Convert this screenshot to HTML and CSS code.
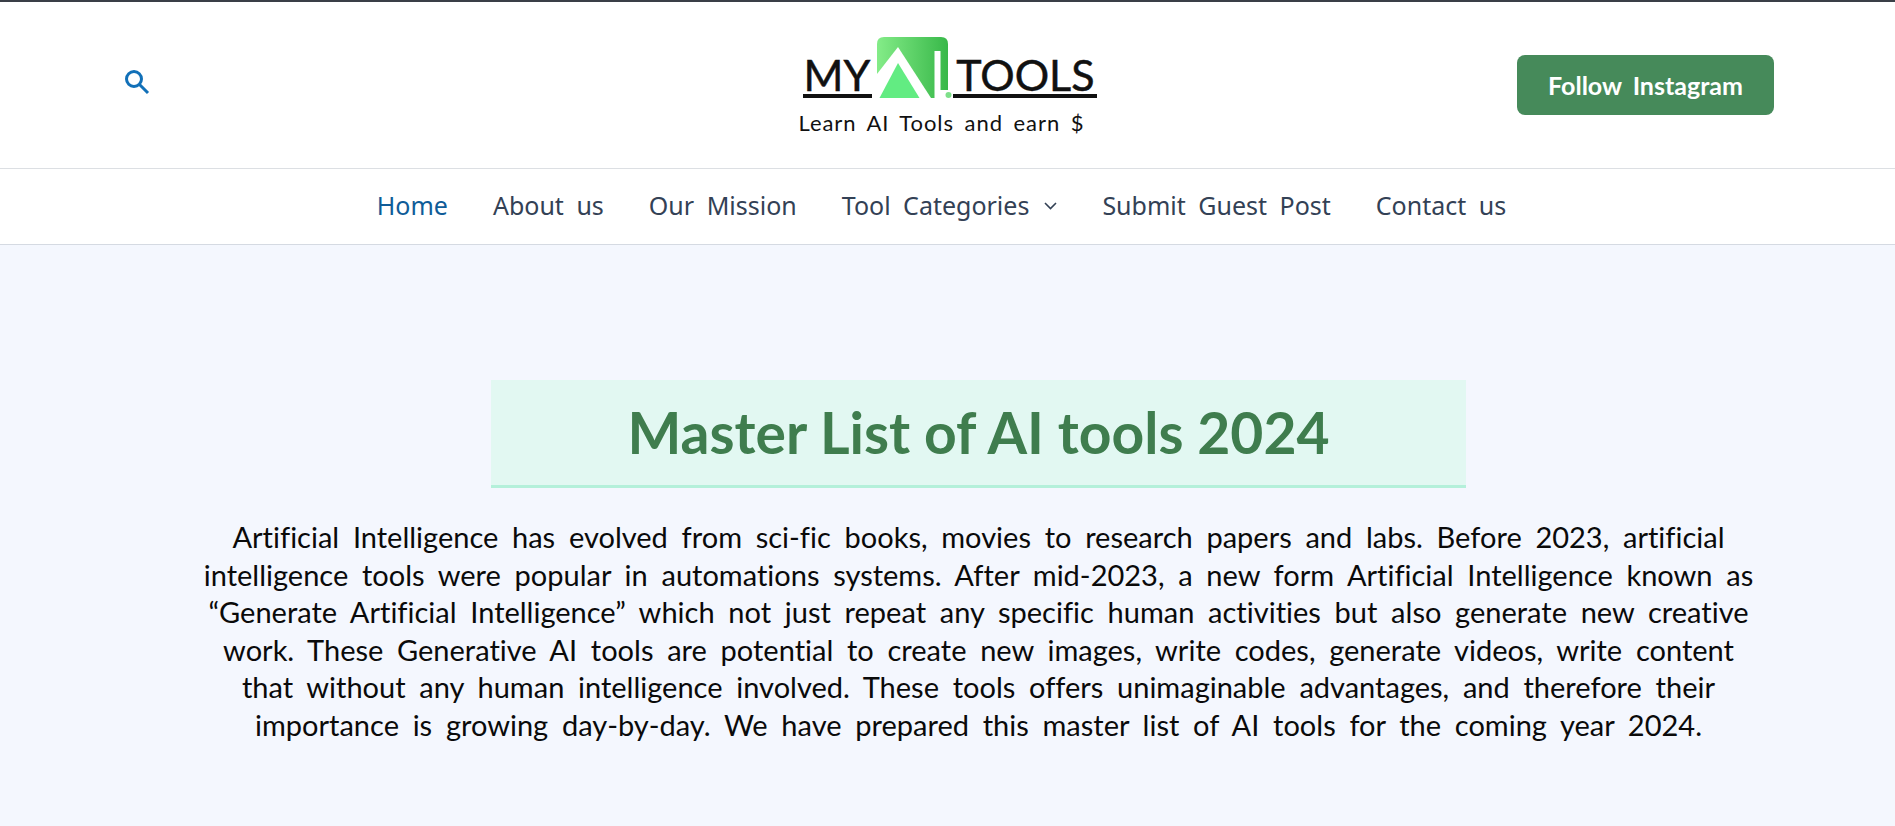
FILE: index.html
```html
<!DOCTYPE html>
<html lang="en">
<head>
  <meta charset="UTF-8">
  <meta name="viewport" content="width=device-width, initial-scale=1.0">
  <title>My AI Tools</title>
  <link rel="stylesheet" href="styles.css">
</head>
<body>
  <header class="top">
    <a class="search-link" href="#" aria-label="Search">
      <svg width="26" height="26" viewBox="0 0 26 26" fill="none" stroke="#1170b8" stroke-width="3">
        <circle cx="10" cy="10" r="7.5"/>
        <path d="M15.5 15.5 L24 24"/>
      </svg>
    </a>
    <a class="logo" href="#">
      <span class="logo-mark">
        <span class="logo-word logo-my">MY</span>
        <svg class="logo-ai" width="75" height="61" viewBox="0 0 75 61">
          <defs>
            <linearGradient id="logo-grad" x1="0" y1="0" x2="1" y2="0">
              <stop offset="0" stop-color="#84ec88"/>
              <stop offset="1" stop-color="#38b849"/>
            </linearGradient>
          </defs>
          <path d="M7 0 H64 Q71 0 71 7 V53 H63 V61 H0 V7 Q0 0 7 0 Z" fill="url(#logo-grad)"/>
          <path d="M21 10 L54 61 H0 V37 Z" fill="#fff"/>
          <path d="M21 26 L42.5 61 H2.5 Z" fill="#62ec82"/>
          <rect x="57.5" y="14" width="6" height="47" fill="#fff"/>
          <circle cx="71.5" cy="58" r="3" fill="#7fe08a"/>
        </svg>
        <span class="logo-word logo-tools">TOOLS</span>
      </span>
      <span class="logo-tag">Learn AI Tools and earn $</span>
    </a>
    <div class="top-right">
      <a class="follow-btn" href="#">Follow Instagram</a>
    </div>
  </header>

  <nav class="menu">
    <a class="menu-item active" href="#">Home</a>
    <a class="menu-item" href="#">About us</a>
    <a class="menu-item" href="#">Our Mission</a>
    <a class="menu-item" href="#">Tool Categories
      <svg class="caret" width="13" height="8" viewBox="0 0 13 8" fill="none" stroke="#334155" stroke-width="1.6">
        <path d="M1 1 L6.5 6.5 L12 1"/>
      </svg>
    </a>
    <a class="menu-item" href="#">Submit Guest Post</a>
    <a class="menu-item" href="#">Contact us</a>
  </nav>

  <main class="content">
    <h1 class="title">Master List of AI tools 2024</h1>
    <p class="intro">Artificial Intelligence has evolved from sci-fic books, movies to research papers and labs. Before 2023, artificial intelligence tools were popular in automations systems. After mid-2023, a new form Artificial Intelligence known as “Generate Artificial Intelligence” which not just repeat any specific human activities but also generate new creative work. These Generative AI tools are potential to create new images, write codes, generate videos, write content that without any human intelligence involved. These tools offers unimaginable advantages, and therefore their importance is growing day-by-day. We have prepared this master list of AI tools for the coming year 2024.</p>
  </main>
</body>
</html>
```

FILE: styles.css
```css
html, body {
  height: 100%;
}
body {
  margin: 0;
  overflow: hidden;
  font-family: "Lato", sans-serif;
  font-variant-ligatures: none;
  background: #f4f7fe;
  border-top: 2px solid #3a3f47;
  color: #000;
}
a {
  text-decoration: none;
  color: inherit;
}
.top {
  display: grid;
  grid-template-columns: 1fr auto 1fr;
  align-items: center;
  height: 166px;
  padding: 0 121px 0 124px;
  background: #fff;
  border-bottom: 1px solid #dcdfe3;
}
.search-link {
  display: flex;
  margin-top: -6px;
}
.logo {
  display: flex;
  flex-direction: column;
  margin-top: -1px;
  margin-left: -3px;
}
.logo-mark {
  display: flex;
  align-items: flex-end;
  height: 62px;
  margin: 2px 0 0 5px;
}
.logo-word {
  font-size: 43px;
  line-height: 38px;
  height: 38px;
  color: #111;
  -webkit-text-stroke: 0.5px #111;
  border-bottom: 4px solid #111;
}
.logo-my {
  padding-right: 2px;
  margin-right: 5px;
}
.logo-ai {
  flex: none;
  margin-right: 1px;
}
.logo-tools {
  padding: 0 2px 0 3px;
}
.logo-tag {
  margin-top: 12px;
  font-size: 22px;
  line-height: 26px;
  letter-spacing: 0.95px;
  word-spacing: 4px;
  white-space: nowrap;
  color: #111;
}
.top-right {
  display: flex;
  justify-content: flex-end;
}
.follow-btn {
  display: flex;
  align-items: center;
  justify-content: center;
  width: 257px;
  height: 60px;
  border-radius: 8px;
  background: #468a5a;
  color: #fff;
  font-size: 25px;
  font-weight: 700;
  word-spacing: 5px;
}
.menu {
  display: flex;
  justify-content: center;
  align-items: center;
  gap: 45px;
  height: 75px;
  padding-right: 12px;
  background: #fff;
  border-bottom: 1px solid #d5dae2;
  font-family: "Noto Sans", sans-serif;
  font-size: 25px;
  color: #334155;
}
.menu-item {
  display: flex;
  align-items: center;
  gap: 15px;
  margin-top: -4px;
  word-spacing: 6px;
}
.menu-item.active {
  color: #0f5c98;
}
.caret {
  margin-top: 3px;
}
.content {
  display: flex;
  flex-direction: column;
  align-items: center;
  padding: 135px 0 0 62px;
}
.title {
  box-sizing: border-box;
  width: 975px;
  height: 108px;
  margin: 0;
  background: #e2f8f2;
  border-bottom: 3px solid #b4f0da;
  color: #3f7d4e;
  font-size: 57px;
  font-weight: 700;
  line-height: 105px;
  text-align: center;
}
.intro {
  width: 1560px;
  margin: 30px 0 0;
  font-size: 29px;
  line-height: 37.6px;
  word-spacing: 6.3px;
  text-align: center;
  color: #0a0a0a;
}
```
